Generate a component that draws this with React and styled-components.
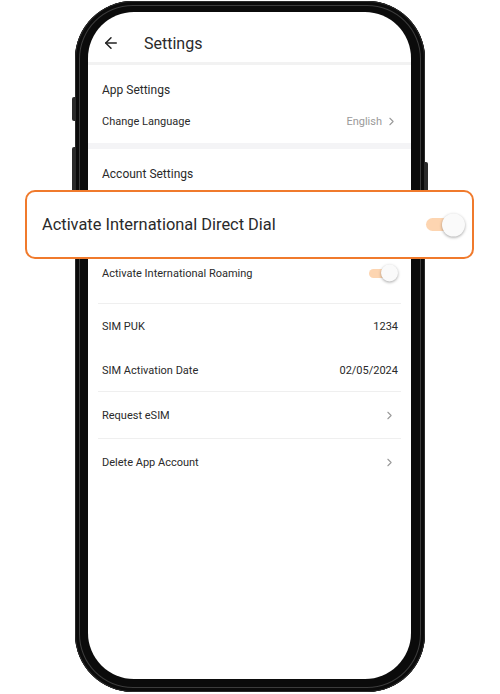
import React from 'react'
import styled, { createGlobalStyle } from 'styled-components'
import { ArrowLeft, ChevronRight } from 'lucide-react'

const Global = createGlobalStyle`
  html, body {
    margin: 0;
    padding: 0;
    background: #fff;
    font-family: Roboto, "Noto Sans", sans-serif;
    color: #2a2a2a;
  }
`

const Page = styled.div`
  position: relative;
  width: 500px;
  height: 694px;
  display: flex;
  justify-content: center;
  padding-top: 1px;
  box-sizing: border-box;
  overflow: hidden;
`

const Phone = styled.div`
  position: relative;
  width: 350px;
  height: 691px;
  box-sizing: border-box;
  padding: 11px 14px 13px 13px;
  border-radius: 58px;
  background: #0b0b0b;
  box-shadow: inset 0 0 0 1px #2a2a2a, inset 0 0 0 4px #0b0b0b, inset 0 0 0 5px #3c3c3c;
`

const SideButton = styled.div`
  position: absolute;
  width: 3px;
  top: ${p => p.$top}px;
  height: ${p => p.$h}px;
  ${p => (p.$right ? 'right: -3px; border-radius: 0 2px 2px 0;' : 'left: -3px; border-radius: 2px 0 0 2px;')}
  background: #2b2b2b;
`

const Screen = styled.div`
  height: 100%;
  background: #fff;
  border-radius: 46px;
  overflow: hidden;
  display: flex;
  flex-direction: column;
`

const Header = styled.div`
  height: 53px;
  flex-shrink: 0;
  display: flex;
  align-items: center;
  padding: 12px 0 0 14px;
  box-sizing: border-box;
  gap: 24px;
  border-bottom: 3px solid #f2f2f2;
`

const Title = styled.div`
  font-size: 16px;
  color: #2a2a2a;
`

const Section = styled.div`
  padding: ${p => p.$pad};
  border-bottom: ${p => (p.$band ? '6px solid #f4f4f6' : 'none')};
`

const List = styled.div`
  padding: 0 10px;
`

const Row = styled.div`
  height: ${p => p.$h}px;
  box-sizing: border-box;
  padding: 0 5px ${p => p.$pb || 0}px 4px;
  display: flex;
  align-items: center;
  justify-content: space-between;
  border-bottom: ${p => (p.$line ? '1px solid #efefef' : 'none')};
`

const GroupTitle = styled.div`
  font-size: 12px;
  color: #2a2a2a;
`

const Label = styled.div`
  font-size: 11px;
  color: #2a2a2a;
  visibility: ${p => (p.$hidden ? 'hidden' : 'visible')};
`

const Value = styled.div`
  font-size: 11px;
  color: ${p => (p.$muted ? '#9a9a9a' : '#2a2a2a')};
  display: flex;
  align-items: center;
  gap: 3px;
  margin-right: -2px;
`

const Track = styled.div`
  position: relative;
  width: ${p => p.$w}px;
  height: ${p => p.$th}px;
  border-radius: ${p => p.$th / 2}px;
  background: #fdd5b1;
`

const Knob = styled.div`
  position: absolute;
  top: 50%;
  right: -2px;
  width: ${p => p.$d}px;
  height: ${p => p.$d}px;
  transform: translateY(-50%);
  border-radius: 50%;
  background: #fafafa;
  box-shadow: 0 1px 3px rgba(0, 0, 0, 0.35);
`

const Callout = styled.div`
  position: absolute;
  left: 25px;
  top: 190px;
  width: 449px;
  height: 69px;
  box-sizing: border-box;
  border: 2px solid #f07a2c;
  border-radius: 10px;
  background: #fff;
  display: flex;
  align-items: center;
  justify-content: space-between;
  padding: 0 9px 0 15px;
`

const CalloutText = styled.div`
  font-size: 16.4px;
  color: #2a2a2a;
`

const Toggle = ({ w, th, d }) => (
  <Track $w={w} $th={th}>
    <Knob $d={d} />
  </Track>
)

const Chevron = () => <ChevronRight size={13} color="#9a9a9a" strokeWidth={2} />

export default function App() {
  return (
    <>
      <Global />
      <Page>
        <Phone>
          <SideButton $top={96} $h={24} />
          <SideButton $top={146} $h={46} />
          <SideButton $right $top={161} $h={30} />
          <Screen>
            <Header>
              <ArrowLeft size={18} color="#222" strokeWidth={2} />
              <Title>Settings</Title>
            </Header>
            <Section $pad="10px 0 6px" $band>
              <List>
                <Row $h={30}>
                  <GroupTitle>App Settings</GroupTitle>
                </Row>
                <Row $h={32}>
                  <Label>Change Language</Label>
                  <Value $muted>
                    English <Chevron />
                  </Value>
                </Row>
              </List>
            </Section>
            <Section $pad="10px 0 0">
              <List>
                <Row $h={30}>
                  <GroupTitle>Account Settings</GroupTitle>
                </Row>
                <Row $h={62} $line>
                  <Label $hidden>Activate International Direct Dial</Label>
                </Row>
                <Row $h={53} $pb={8} $line>
                  <Label>Activate International Roaming</Label>
                  <Toggle w={27} th={9} d={17} />
                </Row>
                <Row $h={45}>
                  <Label>SIM PUK</Label>
                  <Value>1234</Value>
                </Row>
                <Row $h={43} $line>
                  <Label>SIM Activation Date</Label>
                  <Value>02/05/2024</Value>
                </Row>
                <Row $h={47} $line>
                  <Label>Request eSIM</Label>
                  <Chevron />
                </Row>
                <Row $h={47}>
                  <Label>Delete App Account</Label>
                  <Chevron />
                </Row>
              </List>
            </Section>
          </Screen>
        </Phone>
        <Callout>
          <CalloutText>Activate International Direct Dial</CalloutText>
          <Toggle w={37} th={13} d={23} />
        </Callout>
      </Page>
    </>
  )
}
